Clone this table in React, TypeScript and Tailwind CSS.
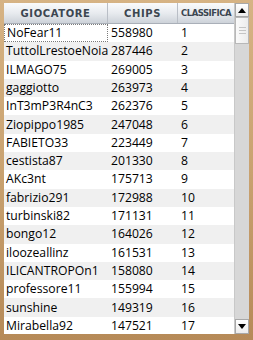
const ROWS: [string, string, string][] = [
  ["NoFear11", "558980", "1"],
  ["TuttolLrestoeNoia", "287446", "2"],
  ["ILMAGO75", "269005", "3"],
  ["gaggiotto", "263973", "4"],
  ["InT3mP3R4nC3", "262376", "5"],
  ["Ziopippo1985", "247048", "6"],
  ["FABIETO33", "223449", "7"],
  ["cestista87", "201330", "8"],
  ["AKc3nt", "175713", "9"],
  ["fabrizio291", "172988", "10"],
  ["turbinski82", "171131", "11"],
  ["bongo12", "164026", "12"],
  ["iloozeallinz", "161531", "13"],
  ["ILICANTROPOn1", "158080", "14"],
  ["professore11", "155994", "15"],
  ["sunshine", "149319", "16"],
  ["Mirabella92", "147521", "17"],
];

const headCls =
  "flex h-full items-center justify-center overflow-hidden whitespace-nowrap border-r border-[#b9bec6] text-[10px] font-bold tracking-[0.6px] text-[#3c4650]";

export default function App() {
  return (
    <div className="flex h-[340px] w-[253px] bg-gradient-to-b from-[#d6b384] via-[#c9a270] to-[#b68a58] pt-[3px] pr-[4px] pb-[6px] pl-[4px] font-['Open_Sans','Noto_Sans',sans-serif]">
      <div className="flex min-w-0 flex-1 bg-white">
        {/* table */}
        <div className="flex min-w-0 flex-1 flex-col overflow-hidden">
          <div className="grid h-[21px] shrink-0 grid-cols-[104px_70px_56px] border-b border-[#a9afb8] bg-gradient-to-b from-[#fafbfc] via-[#e8ebef] to-[#cdd2d9] font-['DejaVu_Sans',sans-serif]">
            <div className={headCls}>GIOCATORE</div>
            <div className={headCls}>CHIPS</div>
            <div className="flex h-full items-center overflow-hidden whitespace-nowrap pl-[3px] text-[8.5px] font-bold tracking-[-0.5px] text-[#3c4650]">
              CLASSIFICA
            </div>
          </div>
          {ROWS.map(([name, chips, rank], i) => (
            <div
              key={name}
              className={`grid h-[18.3px] shrink-0 grid-cols-[104px_70px_56px] items-center text-[12.2px] leading-none text-black ${
                i % 2 ? "bg-[#f0f0f0]" : "bg-white"
              }`}
            >
              <div
                className={`flex h-full items-center pl-[2px] ${
                  i === 0 ? "border border-dotted border-[#7a7a7a]" : ""
                }`}
              >
                {name}
              </div>
              <div className="pl-[3px]">{chips}</div>
              <div className="pl-[3px]">{rank}</div>
            </div>
          ))}
        </div>
        {/* scrollbar */}
        <div className="flex w-[15px] shrink-0 flex-col border-l border-[#c8c8c8] bg-[#d7d7d7]">
          <div className="flex h-[14px] items-center justify-center border border-[#a8a8a8] bg-gradient-to-b from-white to-[#ececec]">
            <svg width="8" height="5" viewBox="0 0 8 5">
              <path d="M0 5 L4 0 L8 5 Z" fill="#000" />
            </svg>
          </div>
          <div className="flex h-[27px] flex-col items-center justify-center gap-[2px] border border-[#b8b8b8] bg-gradient-to-r from-[#fafafa] to-[#ececec]">
            <div className="h-px w-[7px] bg-[#c4c4c4]" />
            <div className="h-px w-[7px] bg-[#c4c4c4]" />
            <div className="h-px w-[7px] bg-[#c4c4c4]" />
          </div>
          <div className="flex-1" />
          <div className="flex h-[15px] items-center justify-center border border-[#a8a8a8] bg-gradient-to-b from-white to-[#ececec]">
            <svg width="8" height="5" viewBox="0 0 8 5">
              <path d="M0 0 L8 0 L4 5 Z" fill="#000" />
            </svg>
          </div>
        </div>
      </div>
    </div>
  );
}
